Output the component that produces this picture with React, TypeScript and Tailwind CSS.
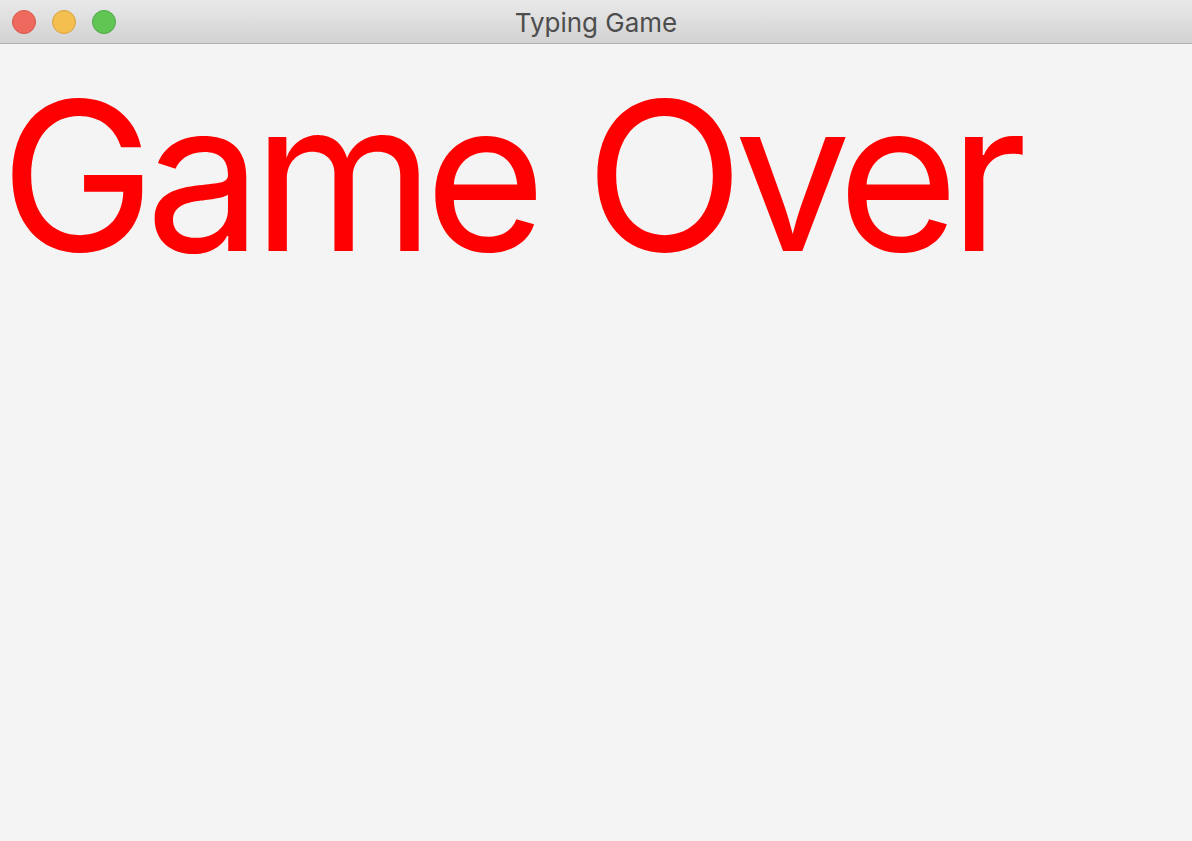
export default function App() {
  const lights = ["bg-[#ee6a5f] border-[#d5554b]", "bg-[#f5bf4f] border-[#d6a243]", "bg-[#61c554] border-[#4fa845]"];

  return (
    <div className="w-[1192px] h-[841px] flex flex-col bg-[#f4f4f4] overflow-hidden">
      {/* window title bar */}
      <div className="relative h-[44px] shrink-0 flex items-center justify-center bg-gradient-to-b from-[#e9e9e9] to-[#d2d2d2] border-b border-[#b1b1b1]">
        <div className="absolute left-[12px] top-[10px] flex gap-[16px]">
          {lights.map((c, i) => (
            <div key={i} className={`w-[24px] h-[24px] rounded-full border ${c}`} />
          ))}
        </div>
        <span className="text-[26px] text-[#4d4d4d] font-['Inter',sans-serif] leading-none pt-[2px]">Typing Game</span>
      </div>

      {/* game canvas */}
      <div className="flex-1">
        <h1 className="font-['Inter',sans-serif] text-[208px] leading-none text-[#ff0000] tracking-[-0.047em] mt-[27px] whitespace-nowrap">
          Game Over
        </h1>
      </div>
    </div>
  );
}
